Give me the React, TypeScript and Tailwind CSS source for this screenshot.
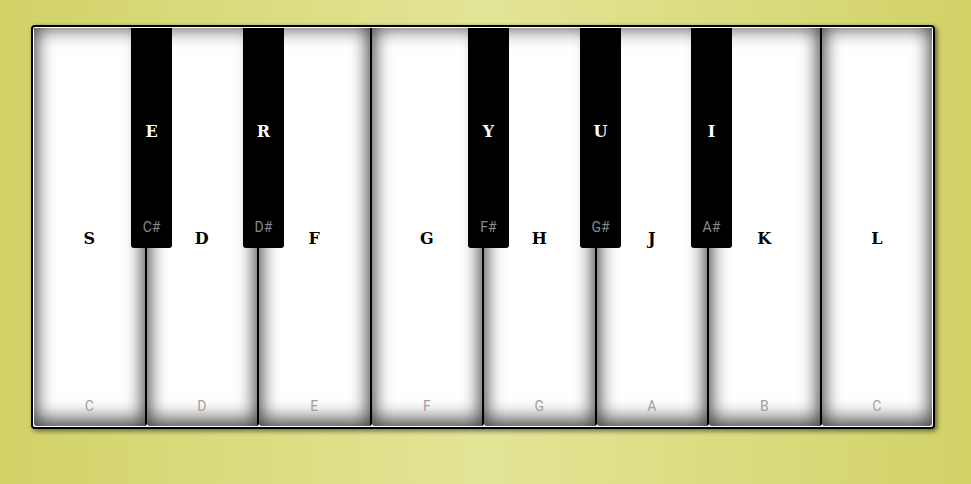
const whiteKeys = [
    { key: "S", note: "C" },
    { key: "D", note: "D" },
    { key: "F", note: "E" },
    { key: "G", note: "F" },
    { key: "H", note: "G" },
    { key: "J", note: "A" },
    { key: "K", note: "B" },
    { key: "L", note: "C" },
];

const blackKeys = [
    { key: "E", note: "C#", left: "left-[98px]" },
    { key: "R", note: "D#", left: "left-[210px]" },
    { key: "Y", note: "F#", left: "left-[435px]" },
    { key: "U", note: "G#", left: "left-[547px]" },
    { key: "I", note: "A#", left: "left-[658px]" },
];

export default function App() {
    return (
        <div className="w-full h-[484px] flex pt-[25px] pl-[31px] bg-[linear-gradient(to_right,#d2d268,#e3e597_50%,#d2d268)]">
            <div className="relative w-[904px] h-[404px] flex border-2 border-black rounded-[4px] p-px bg-white shadow-[2px_2px_5px_rgba(0,0,0,0.55)]">
                {whiteKeys.map((k, i) => (
                    <div
                        key={i}
                        className={
                            "flex-1 relative flex flex-col items-center bg-white rounded-b-[3px] shadow-[inset_0_-10px_18px_rgba(0,0,0,0.35),inset_0_0_20px_rgba(0,0,0,0.7)] " +
                            (i < whiteKeys.length - 1 ? "border-r-2 border-black" : "")
                        }
                    >
                        <span className="absolute top-[202px] font-['DejaVu_Serif',serif] font-bold text-[16px] leading-[18px] text-black">
                            {k.key}
                        </span>
                        <span className="absolute bottom-[11px] font-['Liberation_Sans_Narrow',Roboto,sans-serif] text-[14px] leading-[18px] text-[#a0a0a0]">
                            {k.note}
                        </span>
                    </div>
                ))}

                {blackKeys.map((k, i) => (
                    <div
                        key={i}
                        className={
                            "absolute top-px w-[41px] h-[220px] bg-black rounded-b-[3px] flex flex-col items-center " +
                            k.left
                        }
                    >
                        <span className="mt-[95px] font-['DejaVu_Serif',serif] font-bold text-[16px] leading-[18px] text-white">
                            {k.key}
                        </span>
                        <span className="mt-auto mb-[12px] font-['Liberation_Sans_Narrow',Roboto,sans-serif] text-[14px] leading-[18px] text-[#8a8a8a]">
                            {k.note}
                        </span>
                    </div>
                ))}
            </div>
        </div>
    );
}
